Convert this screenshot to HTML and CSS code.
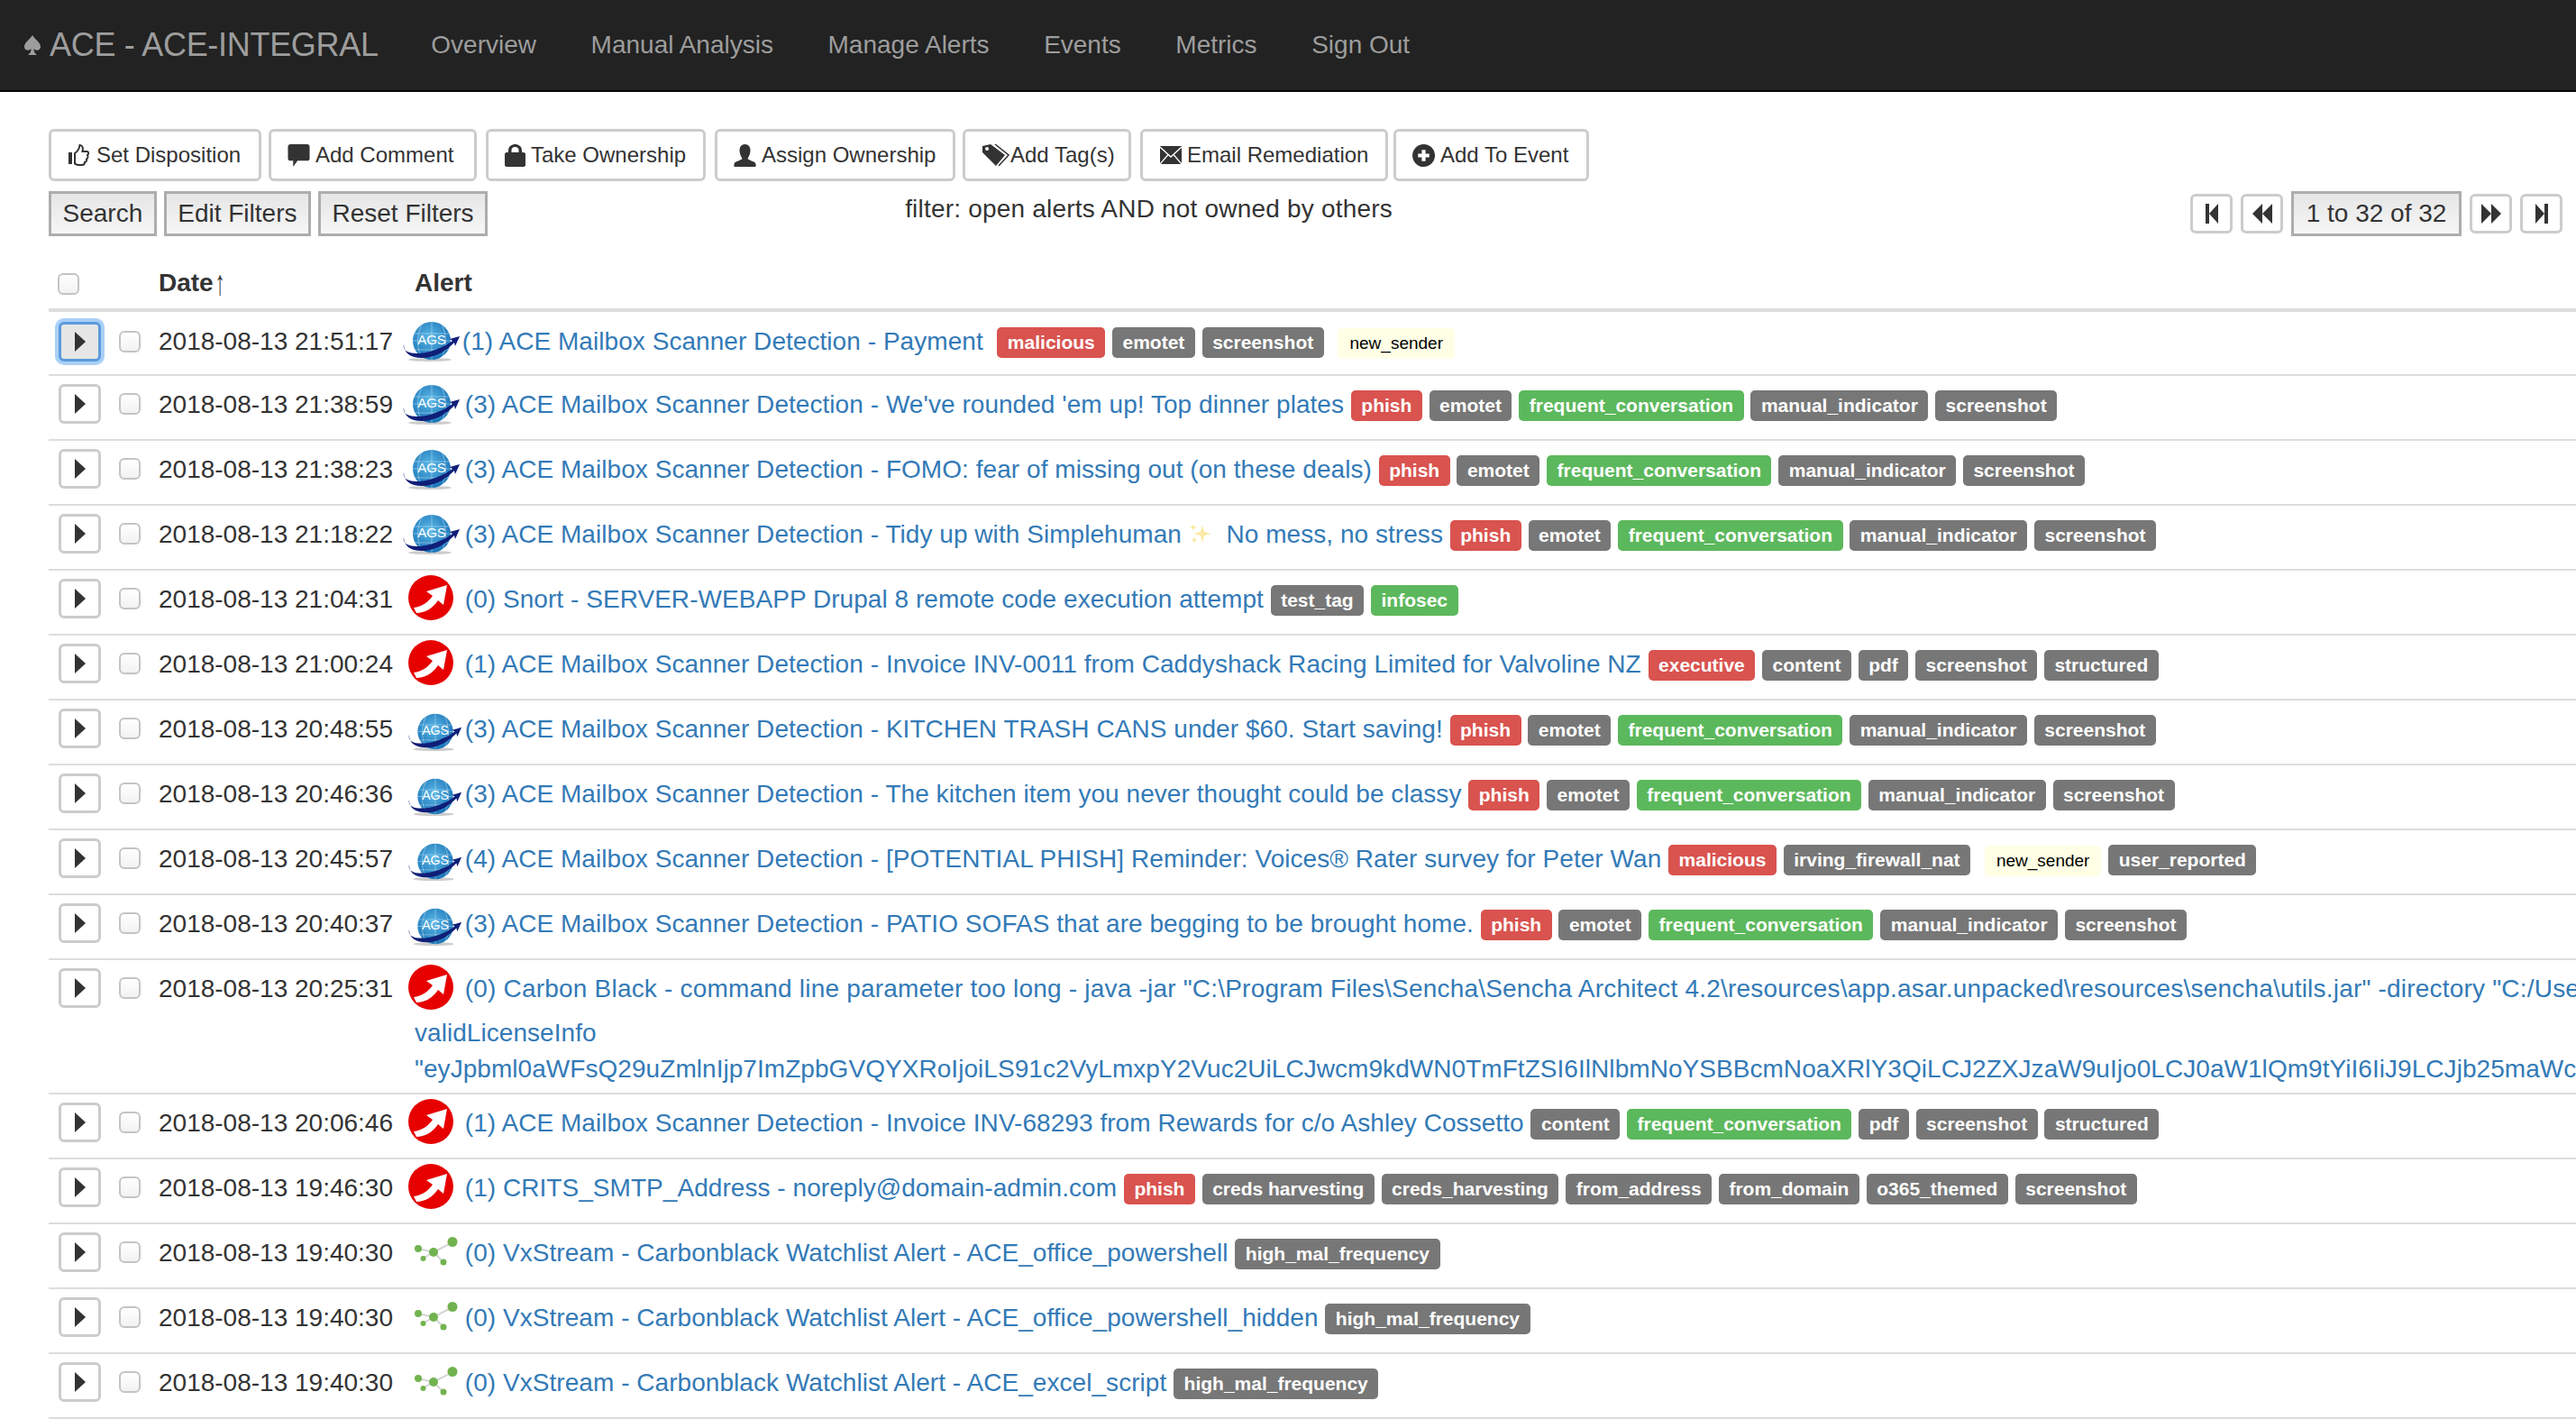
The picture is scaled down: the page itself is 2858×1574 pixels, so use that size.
FILE: index.html
```html
<!DOCTYPE html>
<html lang="en">
<head>
    <meta charset="UTF-8">
    <title>ACE - Manage Alerts</title>
    <link rel="stylesheet" href="styles.css">
</head>
<body>

<!-- Shared icons -->
<svg class="defs" width="0" height="0">
    <defs>
        <radialGradient id="globe" cx="45%" cy="40%" r="65%">
            <stop offset="0" stop-color="#5cb8e6"/>
            <stop offset="1" stop-color="#1670b4"/>
        </radialGradient>
    </defs>
    <symbol id="ic-ags" viewBox="0 0 64 48">
        <ellipse cx="30" cy="45" rx="24" ry="2" fill="#ccc"/>
        <circle cx="32" cy="24" r="21" fill="url(#globe)"/>
        <path d="M32 3V45M21 6C15 18 15 32 21 43M43 6C49 18 49 32 43 43M12 16H52M11 24H53M14 34H50" stroke="#cbe9f8" stroke-width=".7" fill="none" opacity=".7"/>
        <path d="M1 28C-2 40 20 40 36 34C45 31 51 27 55 24L52 22L63 19L58 30L57 26C48 35 36 43 21 43C8 43 1 37 1 28Z" fill="#101f78"/>
    </symbol>
    <symbol id="ic-red" viewBox="0 0 50 50">
        <circle cx="25" cy="25" r="25" fill="#e60000"/>
        <path d="M6 36C15 35 22 30 27 23L20 18L43 11L39 33L33 28C27 37 18 42 9 42Z" fill="#fff"/>
    </symbol>
    <symbol id="ic-net" viewBox="0 0 48 33">
        <path d="M42 7L21 18L4 14M21 18L9 25M21 18L32 29" stroke="#d4d4d4" stroke-width="2" fill="none"/>
        <circle cx="42" cy="6.500" r="5.500" fill="#72b34f"/>
        <circle cx="21" cy="18" r="5" fill="#72b34f"/>
        <circle cx="4" cy="14" r="4" fill="#72b34f"/>
        <circle cx="9.500" cy="25" r="3" fill="#72b34f"/>
        <circle cx="32" cy="29" r="3.500" fill="#72b34f"/>
    </symbol>
    <symbol id="gi-play" viewBox="0 0 12 22"><path d="M0 0L12 11L0 22Z"/></symbol>
    <symbol id="gi-first" viewBox="0 0 14 22"><path d="M0 0H4V22H0ZM4 11L14 0V22Z"/></symbol>
    <symbol id="gi-prev" viewBox="0 0 22 22"><path d="M0 11L11 0V22ZM11 11L22 0V22Z"/></symbol>
    <symbol id="gi-next" viewBox="0 0 22 22"><path d="M22 11L11 0V22ZM11 11L0 0V22Z"/></symbol>
    <symbol id="gi-last" viewBox="0 0 14 22"><path d="M14 0H10V22H14ZM10 11L0 0V22Z"/></symbol>
    <symbol id="gi-spade" viewBox="0 0 18 24"><path d="M9 1C12 6 18 9 18 14C18 18 13 19 10.500 16C10.500 19 11.500 21 14 23H4C6.500 21 7.500 19 7.500 16C5 19 0 18 0 14C0 9 6 6 9 1Z"/></symbol>
    <symbol id="gi-thumb" viewBox="0 0 23 24"><path d="M0 9H4V22H0Z" fill="#333"/><path d="M7 10C10 8 12 5 12.500 1C15.500 1 16.500 4 15.500 8H20.500C22.500 8 22.500 11 21 12C22 14 21 16 20 16.500C20.500 18.500 19 20 18 20C18 22 16.500 23 15 23H11C9 23 8 22 7 21.500Z" fill="none" stroke="#333" stroke-width="2"/></symbol>
    <symbol id="gi-comment" viewBox="0 0 25 26"><path d="M3 0H22C24 0 25 1 25 3V16C25 18 24 19 22 19H11L6 26V19H3C1 19 0 18 0 16V3C0 1 1 0 3 0Z"/></symbol>
    <symbol id="gi-lock" viewBox="0 0 23 25"><path d="M4 9V7C4 2 8 0 11.500 0C15 0 19 2 19 7V9H21C22 9 23 10 23 11V23C23 24 22 25 21 25H2C1 25 0 24 0 23V11C0 10 1 9 2 9ZM7.500 9H15.500V7C15.500 4 14 3 11.500 3C9 3 7.500 4 7.500 7Z" fill-rule="evenodd"/></symbol>
    <symbol id="gi-user" viewBox="0 0 24 25"><path d="M12 0C16 0 18 3 18 7C18 11 16 14 15 16C16 18 24 19 24 22V25H0V22C0 19 8 18 9 16C8 14 6 11 6 7C6 3 8 0 12 0Z"/></symbol>
    <symbol id="gi-tags" viewBox="0 0 30 24"><path d="M0 2L9 0L25 12L15 24L0 9ZM5 3A2 2 0 1 0 5.100 7A2 2 0 1 0 5 3Z" fill-rule="evenodd"/><path d="M14 0L29 12L18 24" fill="none" stroke="#333" stroke-width="1.500"/></symbol>
    <symbol id="gi-mail" viewBox="0 0 24 20"><path d="M0 0H24V20H0Z"/><path d="M0 1L12 12L24 1M0 20L9 9.500M24 20L15 9.500" fill="none" stroke="#fff" stroke-width="1.300"/></symbol>
    <symbol id="gi-plus" viewBox="0 0 24 24"><path d="M12 0A12 12 0 1 0 12.100 24A12 12 0 1 0 12 0ZM10 6H14V10H18V14H14V18H10V14H6V10H10Z" fill-rule="evenodd"/></symbol>
    <symbol id="gi-sparkle" viewBox="0 0 26 26"><path d="M15 3L17 11L25 13L17 15L15 23L13 15L5 13L13 11ZM5 2L6 5L9 6L6 7L5 10L4 7L1 6L4 5ZM6 17L7 19L9 20L7 21L6 24L5 21L3 20L5 19Z" fill="#fbe9a0"/></symbol>
</svg>

<!-- Navigation -->
<nav class="navbar">
    <a class="brand"><svg class="spade"><use href="#gi-spade"/></svg>ACE - ACE-INTEGRAL</a>
    <a class="nav-link">Overview</a>
    <a class="nav-link">Manual Analysis</a>
    <a class="nav-link">Manage Alerts</a>
    <a class="nav-link">Events</a>
    <a class="nav-link">Metrics</a>
    <a class="nav-link">Sign Out</a>
</nav>

<div class="content">

    <!-- Alert actions -->
    <div class="actions">
        <button class="btn btn-disposition"><svg class="gi gi-thumb"><use href="#gi-thumb"/></svg>Set Disposition</button>
        <button class="btn btn-comment"><svg class="gi gi-wide"><use href="#gi-comment"/></svg>Add Comment</button>
        <button class="btn btn-take"><svg class="gi"><use href="#gi-lock"/></svg>Take Ownership</button>
        <button class="btn btn-assign"><svg class="gi gi-wide"><use href="#gi-user"/></svg>Assign Ownership</button>
        <button class="btn btn-tags"><svg class="gi gi-tag"><use href="#gi-tags"/></svg>Add Tag(s)</button>
        <button class="btn btn-email"><svg class="gi gi-mail"><use href="#gi-mail"/></svg>Email Remediation</button>
        <button class="btn btn-event"><svg class="gi gi-wide"><use href="#gi-plus"/></svg>Add To Event</button>
    </div>

    <!-- Filters and pager -->
    <div class="toolbar">
        <div class="filters">
            <button class="btn-flat">Search</button>
            <button class="btn-flat">Edit Filters</button>
            <button class="btn-flat">Reset Filters</button>
        </div>
        <div class="filter-text">filter: open alerts AND not owned by others</div>
        <div class="pager">
            <button class="btn-page"><svg class="gi-first"><use href="#gi-first"/></svg></button>
            <button class="btn-page"><svg class="gi-double"><use href="#gi-prev"/></svg></button>
            <button class="btn-flat page-count">1 to 32 of 32</button>
            <button class="btn-page"><svg class="gi-double"><use href="#gi-next"/></svg></button>
            <button class="btn-page"><svg class="gi-first"><use href="#gi-last"/></svg></button>
        </div>
    </div>

    <table class="alerts">
        <thead>
            <tr>
                <th class="col-expand"><input type="checkbox" class="check"></th>
                <th class="col-check"></th>
                <th class="col-date">Date<span class="sort">↑</span></th>
                <th>Alert</th>
            </tr>
        </thead>
        <tbody>
            <tr>
                <td><button class="btn-expand focused"><svg class="gi-play"><use href="#gi-play"/></svg></button></td>
                <td><input type="checkbox" class="check"></td>
                <td>2018-08-13 21:51:17</td>
                <td><div class="alert-line"><svg class="ic ic-ags ic-first" viewBox="0 0 64 48"><use href="#ic-ags"/><text x="32" y="28" class="ags-text">AGS</text></svg> <a class="alert-link">(1) ACE Mailbox Scanner Detection - Payment&nbsp;</a> <span class="tag danger">malicious</span> <span class="tag">emotet</span> <span class="tag">screenshot</span> <span class="tag special">new_sender</span></div></td>
            </tr>
            <tr>
                <td><button class="btn-expand"><svg class="gi-play"><use href="#gi-play"/></svg></button></td>
                <td><input type="checkbox" class="check"></td>
                <td>2018-08-13 21:38:59</td>
                <td><div class="alert-line"><svg class="ic ic-ags" viewBox="0 0 64 48"><use href="#ic-ags"/><text x="32" y="28" class="ags-text">AGS</text></svg> <a class="alert-link">(3) ACE Mailbox Scanner Detection - We've rounded 'em up! Top dinner plates</a> <span class="tag danger">phish</span> <span class="tag">emotet</span> <span class="tag success">frequent_conversation</span> <span class="tag">manual_indicator</span> <span class="tag">screenshot</span></div></td>
            </tr>
            <tr>
                <td><button class="btn-expand"><svg class="gi-play"><use href="#gi-play"/></svg></button></td>
                <td><input type="checkbox" class="check"></td>
                <td>2018-08-13 21:38:23</td>
                <td><div class="alert-line"><svg class="ic ic-ags" viewBox="0 0 64 48"><use href="#ic-ags"/><text x="32" y="28" class="ags-text">AGS</text></svg> <a class="alert-link">(3) ACE Mailbox Scanner Detection - FOMO: fear of missing out (on these deals)</a> <span class="tag danger">phish</span> <span class="tag">emotet</span> <span class="tag success">frequent_conversation</span> <span class="tag">manual_indicator</span> <span class="tag">screenshot</span></div></td>
            </tr>
            <tr>
                <td><button class="btn-expand"><svg class="gi-play"><use href="#gi-play"/></svg></button></td>
                <td><input type="checkbox" class="check"></td>
                <td>2018-08-13 21:18:22</td>
                <td><div class="alert-line"><svg class="ic ic-ags" viewBox="0 0 64 48"><use href="#ic-ags"/><text x="32" y="28" class="ags-text">AGS</text></svg> <a class="alert-link">(3) ACE Mailbox Scanner Detection - Tidy up with Simplehuman <svg class="sparkle"><use href="#gi-sparkle"/></svg> &nbsp;No mess, no stress</a> <span class="tag danger">phish</span> <span class="tag">emotet</span> <span class="tag success">frequent_conversation</span> <span class="tag">manual_indicator</span> <span class="tag">screenshot</span></div></td>
            </tr>
            <tr>
                <td><button class="btn-expand"><svg class="gi-play"><use href="#gi-play"/></svg></button></td>
                <td><input type="checkbox" class="check"></td>
                <td>2018-08-13 21:04:31</td>
                <td><div class="alert-line"><svg class="ic ic-red"><use href="#ic-red"/></svg> <a class="alert-link">(0) Snort - SERVER-WEBAPP Drupal 8 remote code execution attempt</a> <span class="tag">test_tag</span> <span class="tag success">infosec</span></div></td>
            </tr>
            <tr>
                <td><button class="btn-expand"><svg class="gi-play"><use href="#gi-play"/></svg></button></td>
                <td><input type="checkbox" class="check"></td>
                <td>2018-08-13 21:00:24</td>
                <td><div class="alert-line"><svg class="ic ic-red"><use href="#ic-red"/></svg> <a class="alert-link">(1) ACE Mailbox Scanner Detection - Invoice INV-0011 from Caddyshack Racing Limited for Valvoline NZ</a> <span class="tag danger">executive</span> <span class="tag">content</span> <span class="tag">pdf</span> <span class="tag">screenshot</span> <span class="tag">structured</span></div></td>
            </tr>
            <tr>
                <td><button class="btn-expand"><svg class="gi-play"><use href="#gi-play"/></svg></button></td>
                <td><input type="checkbox" class="check"></td>
                <td>2018-08-13 20:48:55</td>
                <td><div class="alert-line"><svg class="ic ic-ags ic-low" viewBox="0 0 64 48"><use href="#ic-ags"/><text x="32" y="28" class="ags-text">AGS</text></svg> <a class="alert-link">(3) ACE Mailbox Scanner Detection - KITCHEN TRASH CANS under $60. Start saving!</a> <span class="tag danger">phish</span> <span class="tag">emotet</span> <span class="tag success">frequent_conversation</span> <span class="tag">manual_indicator</span> <span class="tag">screenshot</span></div></td>
            </tr>
            <tr>
                <td><button class="btn-expand"><svg class="gi-play"><use href="#gi-play"/></svg></button></td>
                <td><input type="checkbox" class="check"></td>
                <td>2018-08-13 20:46:36</td>
                <td><div class="alert-line"><svg class="ic ic-ags ic-low" viewBox="0 0 64 48"><use href="#ic-ags"/><text x="32" y="28" class="ags-text">AGS</text></svg> <a class="alert-link">(3) ACE Mailbox Scanner Detection - The kitchen item you never thought could be classy</a> <span class="tag danger">phish</span> <span class="tag">emotet</span> <span class="tag success">frequent_conversation</span> <span class="tag">manual_indicator</span> <span class="tag">screenshot</span></div></td>
            </tr>
            <tr>
                <td><button class="btn-expand"><svg class="gi-play"><use href="#gi-play"/></svg></button></td>
                <td><input type="checkbox" class="check"></td>
                <td>2018-08-13 20:45:57</td>
                <td><div class="alert-line"><svg class="ic ic-ags ic-low" viewBox="0 0 64 48"><use href="#ic-ags"/><text x="32" y="28" class="ags-text">AGS</text></svg> <a class="alert-link">(4) ACE Mailbox Scanner Detection - [POTENTIAL PHISH] Reminder: Voices® Rater survey for Peter Wan</a> <span class="tag danger">malicious</span> <span class="tag">irving_firewall_nat</span> <span class="tag special">new_sender</span> <span class="tag">user_reported</span></div></td>
            </tr>
            <tr>
                <td><button class="btn-expand"><svg class="gi-play"><use href="#gi-play"/></svg></button></td>
                <td><input type="checkbox" class="check"></td>
                <td>2018-08-13 20:40:37</td>
                <td><div class="alert-line"><svg class="ic ic-ags ic-low" viewBox="0 0 64 48"><use href="#ic-ags"/><text x="32" y="28" class="ags-text">AGS</text></svg> <a class="alert-link">(3) ACE Mailbox Scanner Detection - PATIO SOFAS that are begging to be brought home.</a> <span class="tag danger">phish</span> <span class="tag">emotet</span> <span class="tag success">frequent_conversation</span> <span class="tag">manual_indicator</span> <span class="tag">screenshot</span></div></td>
            </tr>
            <tr>
                <td><button class="btn-expand"><svg class="gi-play"><use href="#gi-play"/></svg></button></td>
                <td><input type="checkbox" class="check"></td>
                <td>2018-08-13 20:25:31</td>
                <td>
                    <div class="alert-line"><svg class="ic ic-red"><use href="#ic-red"/></svg> <a class="alert-link alert-long">(0) Carbon Black - command line parameter too long - java -jar "C:\Program Files\Sencha\Sencha Architect 4.2\resources\app.asar.unpacked\resources\sencha\utils.jar" -directory "C:/Use</a></div>
                    <div class="alert-more"><a class="alert-link">validLicenseInfo</a></div>
                    <div class="alert-more"><a class="alert-link">"eyJpbml0aWFsQ29uZmlnIjp7ImZpbGVQYXRoIjoiLS91c2VyLmxpY2Vuc2UiLCJwcm9kdWN0TmFtZSI6IlNlbmNoYSBBcmNoaXRlY3QiLCJ2ZXJzaW9uIjo0LCJ0aW1lQm9tYiI6IiJ9LCJjb25maWci</a></div>
                </td>
            </tr>
            <tr>
                <td><button class="btn-expand"><svg class="gi-play"><use href="#gi-play"/></svg></button></td>
                <td><input type="checkbox" class="check"></td>
                <td>2018-08-13 20:06:46</td>
                <td><div class="alert-line"><svg class="ic ic-red"><use href="#ic-red"/></svg> <a class="alert-link">(1) ACE Mailbox Scanner Detection - Invoice INV-68293 from Rewards for c/o Ashley Cossetto</a> <span class="tag">content</span> <span class="tag success">frequent_conversation</span> <span class="tag">pdf</span> <span class="tag">screenshot</span> <span class="tag">structured</span></div></td>
            </tr>
            <tr>
                <td><button class="btn-expand"><svg class="gi-play"><use href="#gi-play"/></svg></button></td>
                <td><input type="checkbox" class="check"></td>
                <td>2018-08-13 19:46:30</td>
                <td><div class="alert-line"><svg class="ic ic-red"><use href="#ic-red"/></svg> <a class="alert-link">(1) CRITS_SMTP_Address - noreply@domain-admin.com</a> <span class="tag danger">phish</span> <span class="tag">creds harvesting</span> <span class="tag">creds_harvesting</span> <span class="tag">from_address</span> <span class="tag">from_domain</span> <span class="tag">o365_themed</span> <span class="tag">screenshot</span></div></td>
            </tr>
            <tr>
                <td><button class="btn-expand"><svg class="gi-play"><use href="#gi-play"/></svg></button></td>
                <td><input type="checkbox" class="check"></td>
                <td>2018-08-13 19:40:30</td>
                <td><div class="alert-line"><svg class="ic ic-net"><use href="#ic-net"/></svg> <a class="alert-link">(0) VxStream - Carbonblack Watchlist Alert - ACE_office_powershell</a> <span class="tag">high_mal_frequency</span></div></td>
            </tr>
            <tr>
                <td><button class="btn-expand"><svg class="gi-play"><use href="#gi-play"/></svg></button></td>
                <td><input type="checkbox" class="check"></td>
                <td>2018-08-13 19:40:30</td>
                <td><div class="alert-line"><svg class="ic ic-net"><use href="#ic-net"/></svg> <a class="alert-link">(0) VxStream - Carbonblack Watchlist Alert - ACE_office_powershell_hidden</a> <span class="tag">high_mal_frequency</span></div></td>
            </tr>
            <tr>
                <td><button class="btn-expand"><svg class="gi-play"><use href="#gi-play"/></svg></button></td>
                <td><input type="checkbox" class="check"></td>
                <td>2018-08-13 19:40:30</td>
                <td><div class="alert-line"><svg class="ic ic-net"><use href="#ic-net"/></svg> <a class="alert-link">(0) VxStream - Carbonblack Watchlist Alert - ACE_excel_script</a> <span class="tag">high_mal_frequency</span></div></td>
            </tr>
        </tbody>
    </table>
</div>

</body>
</html>
```

FILE: styles.css
```css
html, body {
    overflow: hidden;
    height: 100%;
}

body {
    margin: 0;
    font-family: "Liberation Sans", Arial, sans-serif;
    font-size: 28px;
    line-height: 40px;
    color: #333;
    background-color: #fff;
}

.defs {
    display: block;
    height: 0;
}

/* Navbar */
.navbar {
    display: flex;
    align-items: center;
    height: 100px;
    padding-left: 27px;
    background-color: #222;
    border-bottom: 2px solid #080808;
}

.brand {
    display: flex;
    align-items: center;
    width: 421px;
    font-size: 36px;
    letter-spacing: -.3px;
    color: #9d9d9d;
}

.spade {
    width: 18px;
    height: 24px;
    margin-right: 10px;
    fill: #9d9d9d;
}

.nav-link {
    padding: 0 30.3px;
    color: #9d9d9d;
}

.content {
    padding: 41px 0 0 54px;
}

/* Buttons */
.actions {
    display: flex;
}

.btn {
    display: flex;
    align-items: center;
    gap: 6px;
    height: 58px;
    padding: 0 0 0 18px;
    font-family: inherit;
    font-size: 24px;
    color: #333;
    background-color: #fff;
    border: 3px solid #ccc;
    border-radius: 6px;
}

.btn-disposition { width: 236px; gap: 8px; padding-left: 19px; }
.btn-comment { width: 231px; margin-left: 8px; }
.btn-take { width: 244px; margin-left: 10px; }
.btn-assign { width: 267px; margin-left: 10px; }
.btn-tags { width: 187px; margin-left: 8px; gap: 1px; padding-left: 19px; }
.btn-email { width: 275px; margin-left: 10px; gap: 6px; padding-left: 19px; }
.btn-event { width: 217px; margin-left: 6px; }

.gi {
    width: 23px;
    height: 25px;
    fill: #333;
}

.gi-wide {
    width: 25px;
}

.gi-thumb {
    height: 24px;
}

.gi-tag {
    width: 30px;
    height: 24px;
}

.gi-mail {
    width: 24px;
    height: 20px;
}

.toolbar {
    display: flex;
    margin-top: 11px;
}

.filters {
    display: flex;
    gap: 8px;
}

.btn-flat {
    height: 50px;
    padding: 0 12.500px;
    font-family: inherit;
    font-size: 28px;
    color: #333;
    background: linear-gradient(#e6e6e6, #f6f6f6);
    border: 3px solid #adadad;
    border-radius: 0;
}

.filter-text {
    margin-left: 463px;
    letter-spacing: .2px;
}

.pager {
    display: flex;
    align-items: center;
    gap: 9px;
    margin-left: auto;
    padding-right: 15px;
}

.page-count {
    width: 189px;
    padding: 0;
}

.btn-page {
    display: flex;
    align-items: center;
    justify-content: center;
    width: 47px;
    height: 44px;
    padding: 0;
    background-color: #fff;
    border: 3px solid #ccc;
    border-radius: 6px;
}

.gi-first {
    width: 14px;
    height: 22px;
    fill: #333;
}

.gi-double {
    width: 22px;
    height: 22px;
    fill: #333;
}

/* Alerts table */
.alerts {
    table-layout: fixed;
    width: 2804px;
    border-collapse: separate;
    border-spacing: 0;
    margin-top: 28px;
    white-space: nowrap;
}

.alerts th {
    height: 56px;
    padding: 0 0 5px;
    box-sizing: border-box;
    text-align: left;
    font-weight: bold;
    vertical-align: middle;
    border-bottom: 4px solid #ddd;
}

.col-expand {
    width: 78px;
}

.col-check {
    width: 44px;
}

.col-date {
    width: 284px;
}

.sort {
    display: inline-block;
    font-weight: normal;
    transform: scale(.8, 1.4);
}

.alerts th .check {
    margin: 2px 0 0 10px;
}

.alerts td {
    height: 72px;
    padding: 9px 0 6px;
    box-sizing: border-box;
    vertical-align: top;
    border-bottom: 2px solid #ddd;
}

.alerts td:nth-child(n+3) {
    padding-top: 12px;
}

.alerts tbody tr:first-child td {
    height: 71px;
    padding-top: 11px;
}

.alerts tbody tr:first-child td:nth-child(n+3) {
    padding-top: 13px;
}

.check {
    appearance: none;
    display: block;
    width: 24px;
    height: 24px;
    margin: 10px 0 0;
    background: linear-gradient(#fff, #f2f2f2);
    border: 2px solid #c4c4c4;
    border-radius: 6px;
}

.btn-expand {
    display: flex;
    align-items: center;
    justify-content: center;
    width: 47px;
    height: 44px;
    margin-left: 11px;
    padding: 0;
    background-color: #fff;
    border: 3px solid #ccc;
    border-radius: 6px;
}

.btn-expand.focused {
    background-color: #e6e6e6;
    border-color: #5b9bdc;
    box-shadow: 0 0 0 4px #a9d0f7;
}

.gi-play {
    width: 12px;
    height: 22px;
    fill: #333;
}

.alert-line {
    height: 49px;
}

.alert-more {
    height: 40px;
}

.alert-link {
    letter-spacing: .05px;
    color: #337ab7;
}

.alert-long {
    letter-spacing: .2px;
}

/* Source icons: negative margins keep them from stretching the line */
.ic {
    margin-top: -20px;
    margin-bottom: -20px;
}

.ic-ags {
    width: 64px;
    height: 48px;
    margin-left: -13px;
    margin-right: -3px;
    vertical-align: 5.600px;
}

.ic-first {
    margin-right: -6px;
}

.ic-low {
    width: 60px;
    height: 45px;
    margin-left: -7px;
    margin-right: -5px;
    vertical-align: 3.600px;
}

.ic-red {
    width: 50px;
    height: 50px;
    margin-left: -7px;
    margin-right: 5px;
    vertical-align: 5.600px;
}

.ic-net {
    width: 48px;
    height: 33px;
    vertical-align: 14.600px;
}

.ags-text {
    font-size: 15px;
    fill: #fff;
    text-anchor: middle;
}

.sparkle {
    width: 26px;
    height: 26px;
    vertical-align: -3px;
}

/* Tags */
.tag {
    display: inline-block;
    padding: 0 11.500px;
    height: 34px;
    line-height: 33px;
    font-size: 21px;
    font-weight: bold;
    color: #fff;
    background-color: #777;
    border-radius: 5px;
    vertical-align: 1px;
}

.tag.danger {
    background-color: #d9534f;
}

.tag.success {
    background-color: #5cb85c;
}

.tag.special {
    margin-left: 8px;
    padding: 0 13px;
    font-size: 19px;
    font-weight: normal;
    color: #000;
    background-color: #ffffe6;
}
```
